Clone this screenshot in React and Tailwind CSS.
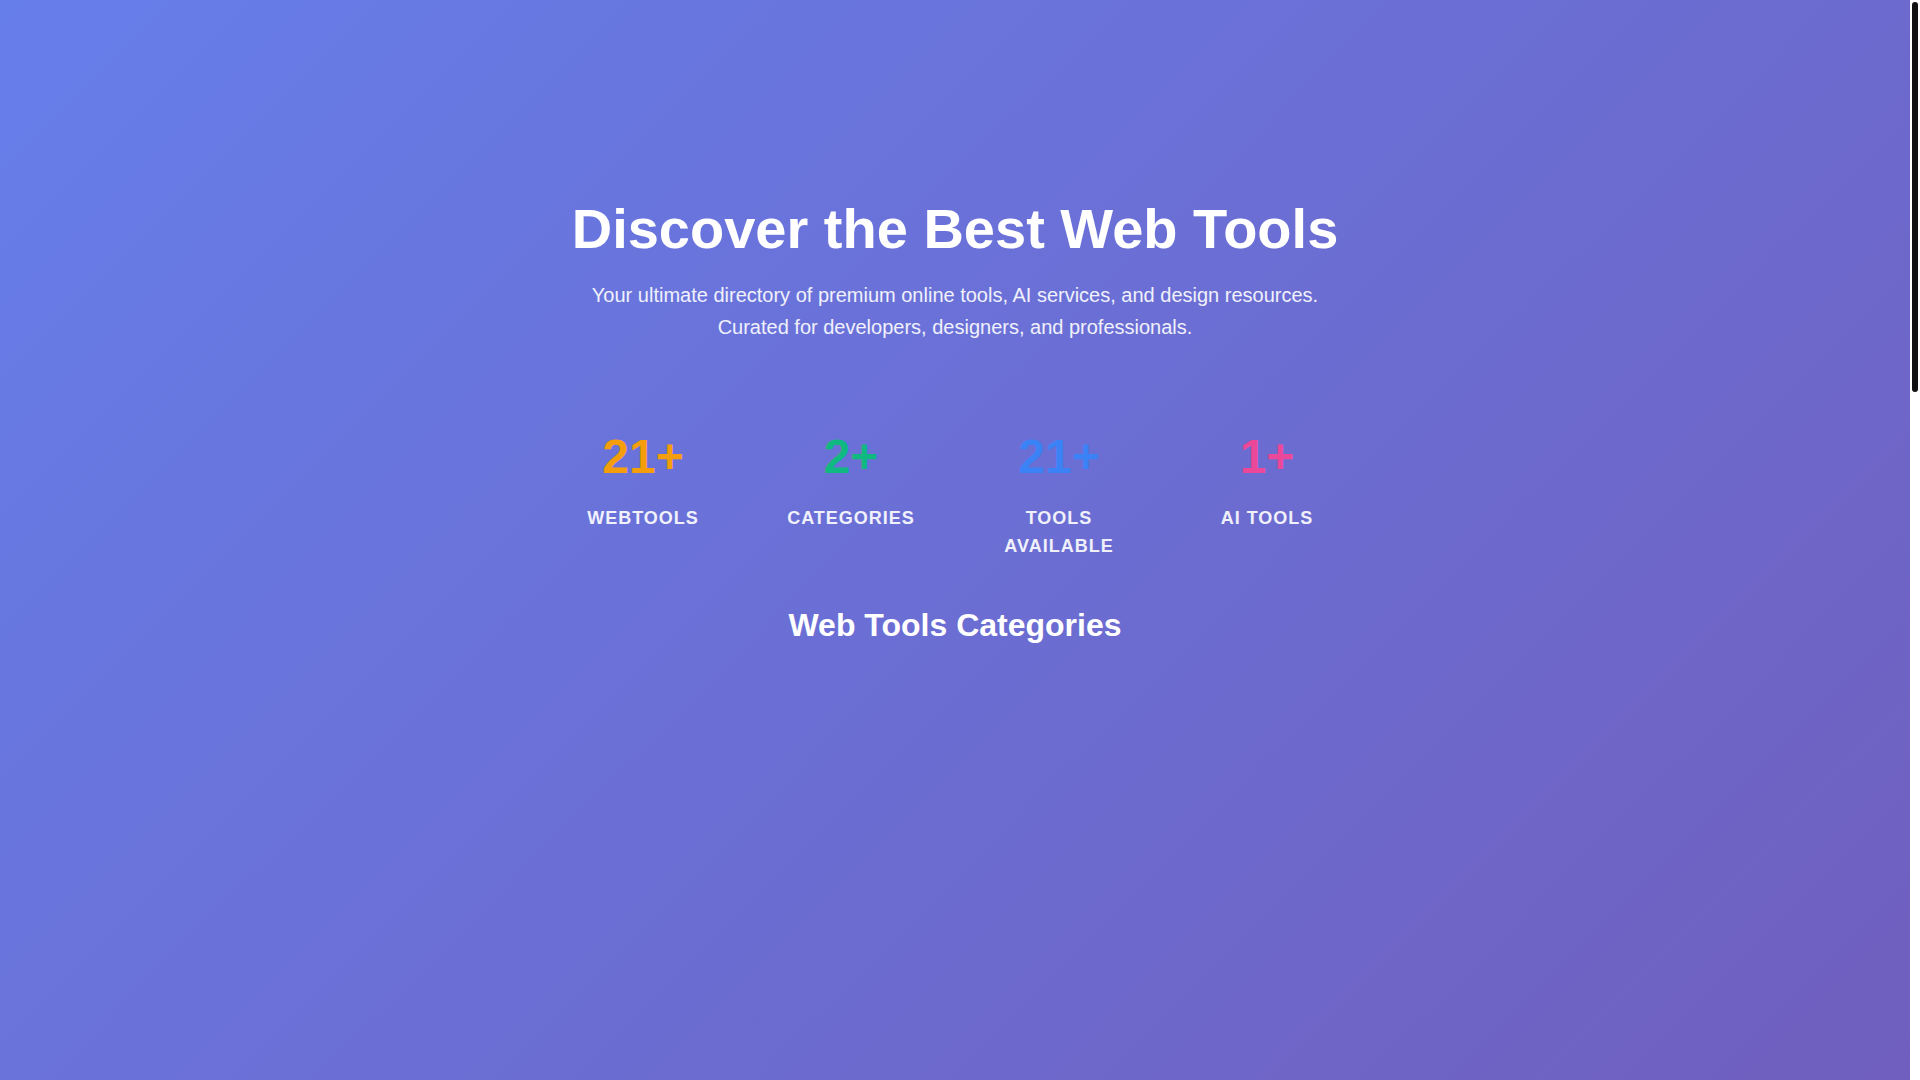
import React from 'react';

const stats = [
  { value: '21+', label: 'Webtools', color: 'text-[#f59e0b]' },
  { value: '2+', label: 'Categories', color: 'text-[#10b981]' },
  { value: '21+', label: 'Tools Available', color: 'text-[#3b82f6]' },
  { value: '1+', label: 'AI Tools', color: 'text-[#ec4899]' },
];

const App = () => {
  return (
    <div className="flex h-screen overflow-hidden font-['Liberation_Sans',Arial,sans-serif]">
      {/* Scrollable page */}
      <main className="flex-1 overflow-y-auto [scrollbar-width:none]">
        <div className="min-h-[2960px] bg-[linear-gradient(135deg,#667eea_0%,#764ba2_100%)] text-center text-white">
          {/* Hero */}
          <section className="px-6 pt-[195px]">
            <h1 className="mb-[17px] text-[56px] font-bold leading-[1.2]">Discover the Best Web Tools</h1>
            <p className="mx-auto max-w-[800px] text-[20px] leading-[32px] text-white/90">
              Your ultimate directory of premium online tools, AI services, and design resources. Curated for developers, designers, and professionals.
            </p>

            {/* Stats */}
            <div className="mx-auto mt-[90px] grid max-w-[800px] grid-cols-4 gap-8">
              {stats.map((s) => (
                <div key={s.label}>
                  <div className={`text-[48px] font-bold leading-[48px] ${s.color}`}>{s.value}</div>
                  <div className="mt-[23px] text-[18px] font-semibold uppercase leading-[28px] tracking-[1px] text-white/90">
                    {s.label}
                  </div>
                </div>
              ))}
            </div>
          </section>

          {/* Categories */}
          <section className="mt-[46px] px-6">
            <h2 className="text-[32px] font-bold leading-[1.2]">Web Tools Categories</h2>
            <div className="mx-auto mt-10 grid max-w-[1200px] grid-cols-3 gap-6"></div>
          </section>
        </div>
      </main>

      {/* Scrollbar track */}
      <div className="w-[10px] shrink-0 bg-white pt-[2px] pl-[2px]">
        <div className="h-[390px] w-[6px] rounded-full bg-[#111]"></div>
      </div>
    </div>
  );
};

export default App;
